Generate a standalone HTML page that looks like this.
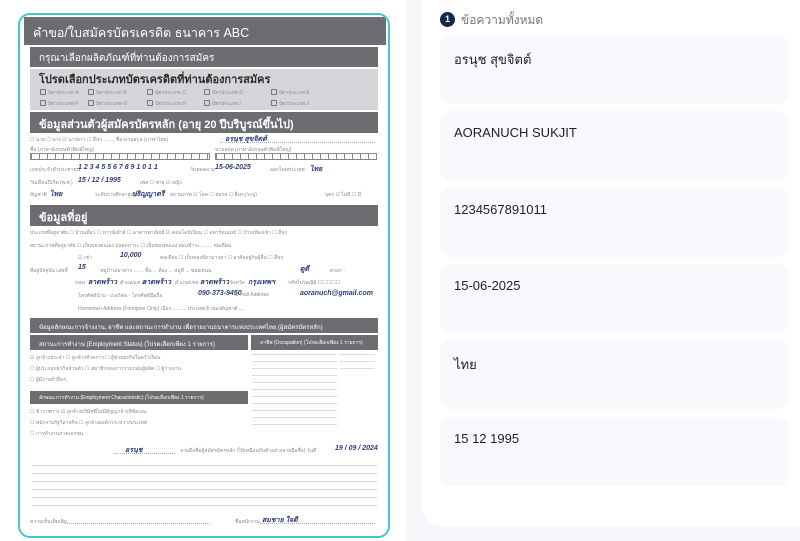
<!DOCTYPE html>
<html><head><meta charset="utf-8"><style>
*{margin:0;padding:0;box-sizing:border-box}
body{width:800px;height:541px;overflow:hidden;background:#fff;font-family:"Liberation Sans","Noto Sans CJK SC",sans-serif;position:relative}
.abs{position:absolute}
.frame{left:18px;top:13px;width:372px;height:525px;border:2px solid #3fcaca;border-radius:12px;background:#fff;overflow:hidden}
.band{position:absolute;background:#6c6d70;color:#fff;font-family:"Liberation Sans","Noto Sans CJK SC",sans-serif;white-space:nowrap}
.t{position:absolute;font-size:5px;color:#8a8a8a;white-space:nowrap;font-family:"Liberation Sans","Noto Sans CJK SC",sans-serif}
.h{position:absolute;font-size:7px;color:#2d3d7a;font-weight:bold;white-space:nowrap;font-style:italic}
.ln{position:absolute;border-bottom:1px dotted #aaa;height:1px}
.cb{position:absolute;width:6px;height:6px;border:1px solid #777;border-radius:1px}
.right{left:406px;top:0;width:394px;height:541px;background:#f5f7fb}
.panel{left:422px;top:-20px;width:400px;height:546px;background:#fff;border-radius:20px}
.card{position:absolute;left:440px;width:348px;height:69px;background:#f7f9fd;border-radius:10px;font-size:13px;color:#222;padding:14px 0 0 14px;font-family:"Liberation Sans","Noto Sans CJK SC",sans-serif}
</style></head><body>
<div class="abs frame">
 <div class="band" style="left:4px;top:2px;width:362px;height:28px;font-size:12.5px;padding:6px 0 0 9px">คำขอ/ใบสมัครบัตรเครดิต ธนาคาร ABC</div>
 <div class="band" style="left:10px;top:32px;width:348px;height:20px;font-size:10px;padding:4px 0 0 9px">กรุณาเลือกผลิตภัณฑ์ที่ท่านต้องการสมัคร</div>
 <div class="abs" style="left:10px;top:54px;width:348px;height:41px;background:#d5d6d9"></div>
 <div class="abs" style="left:19px;top:55px;font-size:11px;color:#2a2a2a;font-weight:bold">โปรดเลือกประเภทบัตรเครดิตที่ท่านต้องการสมัคร</div>
 <div class="cb" style="left:20px;top:74px"></div><div class="t" style="left:28px;top:74px">บัตรประเภท A</div>
 <div class="cb" style="left:68px;top:74px"></div><div class="t" style="left:76px;top:74px">บัตรประเภท B</div>
 <div class="cb" style="left:127px;top:74px"></div><div class="t" style="left:135px;top:74px">บัตรประเภท C</div>
 <div class="cb" style="left:184px;top:74px"></div><div class="t" style="left:192px;top:74px">บัตรประเภท D</div>
 <div class="cb" style="left:251px;top:74px"></div><div class="t" style="left:259px;top:74px">บัตรประเภท E</div>
 <div class="cb" style="left:20px;top:85px"></div><div class="t" style="left:28px;top:85px">บัตรประเภท F</div>
 <div class="cb" style="left:68px;top:85px"></div><div class="t" style="left:76px;top:85px">บัตรประเภท G</div>
 <div class="cb" style="left:127px;top:85px"></div><div class="t" style="left:135px;top:85px">บัตรประเภท H</div>
 <div class="cb" style="left:184px;top:85px"></div><div class="t" style="left:192px;top:85px">บัตรประเภท I</div>
 <div class="cb" style="left:251px;top:85px"></div><div class="t" style="left:259px;top:85px">บัตรประเภท J</div>
 <div class="band" style="left:10px;top:97px;width:348px;height:21px;font-size:11px;padding:3px 0 0 9px;font-weight:bold">ข้อมูลส่วนตัวผู้สมัครบัตรหลัก (อายุ 20 ปีบริบูรณ์ขึ้นไป)</div>
 <div class="t" style="left:10px;top:121px">☐ นาย ☐ นาง ☑ นางสาว ☐ อื่นๆ ........ ชื่อ-นามสกุล (ภาษาไทย)</div><div class="h" style="left:205px;top:119px">อรนุช สุขจิตต์</div><div class="ln" style="left:200px;top:127px;width:155px"></div>
 <div class="t" style="left:10px;top:131px">ชื่อ (ภาษาอังกฤษตัวพิมพ์ใหญ่)</div><div class="t" style="left:195px;top:131px">นามสกุล (ภาษาอังกฤษตัวพิมพ์ใหญ่)</div>
 <div class="abs" style="left:10px;top:138px;width:180px;height:7px;background:repeating-linear-gradient(90deg,#888 0 1px,transparent 1px 8px);border:1px solid #888"></div>
 <div class="abs" style="left:195px;top:138px;width:162px;height:7px;background:repeating-linear-gradient(90deg,#888 0 1px,transparent 1px 8px);border:1px solid #888"></div>
 <div class="t" style="left:10px;top:151px">เลขประจำตัวประชาชน</div><div class="h" style="left:58px;top:149px">1 2 3 4 5 5 6 7 8 9 1 0 1 1</div><div class="t" style="left:170px;top:151px">วันหมดอายุ</div><div class="h" style="left:195px;top:149px">15-06-2025</div><div class="t" style="left:250px;top:151px">ออกโดยประเทศ</div><div class="h" style="left:290px;top:149px">ไทย</div>
 <div class="t" style="left:10px;top:164px">วันเดือนปีเกิด (พ.ศ.)</div><div class="h" style="left:58px;top:162px">15 / 12 / 1995</div><div class="t" style="left:120px;top:164px">เพศ ☐ ชาย ☑ หญิง</div>
 <div class="t" style="left:10px;top:176px">สัญชาติ</div><div class="h" style="left:30px;top:174px">ไทย</div><div class="t" style="left:75px;top:176px">ระดับการศึกษาสูงสุด</div><div class="h" style="left:112px;top:174px">ปริญญาตรี</div><div class="t" style="left:150px;top:176px">สถานภาพ ☑ โสด ☐ สมรส ☐ อื่นๆ (ระบุ)</div><div class="t" style="left:305px;top:176px">บุตร ☑ ไม่มี ☐ มี</div>
 <div class="band" style="left:10px;top:190px;width:348px;height:21px;font-size:11px;padding:3px 0 0 9px;font-weight:bold">ข้อมูลที่อยู่</div>
 <div class="t" style="left:10px;top:214px">ประเภทที่อยู่อาศัย ☐ บ้านเดี่ยว ☐ ทาวน์เฮ้าส์ ☐ อาคารพาณิชย์ ☑ คอนโดมิเนียม ☐ อพาร์ทเมนท์ ☐ บ้าน/ห้องเช่า ☐ อื่นๆ</div>
 <div class="t" style="left:10px;top:227px">สถานะภาพที่อยู่อาศัย ☐ เป็นของตนเอง ปลอดภาระ ☐ เป็นของตนเอง ผ่อนชำระ ........ ต่อเดือน</div>
 <div class="t" style="left:58px;top:239px">☑ เช่า</div><div class="h" style="left:100px;top:237px">10,000</div><div class="t" style="left:140px;top:239px">ต่อเดือน ☐ เป็นของบิดามารดา ☐ อาศัยอยู่กับผู้อื่น ☐ อื่นๆ</div>
 <div class="t" style="left:10px;top:252px">ที่อยู่ปัจจุบัน เลขที่</div><div class="h" style="left:58px;top:249px">15</div><div class="t" style="left:80px;top:252px">หมู่บ้าน/อาคาร ....... ชั้น ... ห้อง ... หมู่ที่ ... ซอย/ถนน</div><div class="h" style="left:280px;top:249px">ดูดี</div><div class="t" style="left:310px;top:252px">ตรอก -</div>
 <div class="t" style="left:55px;top:264px">ถนน</div><div class="h" style="left:68px;top:262px">ลาดพร้าว</div><div class="t" style="left:100px;top:264px">ตำบล/แขวง</div><div class="h" style="left:122px;top:262px">ลาดพร้าว</div><div class="t" style="left:155px;top:264px">อำเภอ/เขต</div><div class="h" style="left:180px;top:262px">ลาดพร้าว</div><div class="t" style="left:210px;top:264px">จังหวัด</div><div class="h" style="left:228px;top:262px">กรุงเทพฯ</div><div class="t" style="left:268px;top:264px">รหัสไปรษณีย์ ☐☐☐☐☐</div>
 <div class="t" style="left:58px;top:277px">โทรศัพท์บ้าน - เบอร์ต่อ - โทรศัพท์มือถือ</div><div class="h" style="left:178px;top:275px">090-373-9450</div><div class="t" style="left:215px;top:277px">E-mail Address</div><div class="h" style="left:280px;top:275px">aoranuch@gmail.com</div>
 <div class="t" style="left:58px;top:290px">Hometown Address (Foreigner Only) เมือง .......... ประเทศเจ้าของสัญชาติ ....</div>
 <div class="band" style="left:10px;top:303px;width:348px;height:15px;font-size:6px;padding:4px 0 0 9px">ข้อมูลลักษณะการจ้างงาน, อาชีพ และสถานะการทำงาน เพื่อรายงานธนาคารแห่งประเทศไทย (ผู้สมัครบัตรหลัก)</div>
 <div class="band" style="left:10px;top:320px;width:218px;height:15px;font-size:6px;padding:4px 0 0 9px">สถานะการทำงาน (Employment Status) (โปรดเลือกเพียง 1 รายการ)</div>
 <div class="band" style="left:231px;top:320px;width:127px;height:15px;font-size:5px;padding:4px 0 0 9px">อาชีพ (Occupation) (โปรดเลือกเพียง 1 รายการ)</div>
 <div class="t" style="left:10px;top:339px">☑ ลูกจ้างประจำ ☐ ลูกจ้างชั่วคราว ☐ ผู้ช่วยธุรกิจในครัวเรือน</div>
 <div class="t" style="left:10px;top:350px">☐ ผู้ประกอบธุรกิจส่วนตัว ☐ สมาชิกของการรวมกลุ่มผู้ผลิต ☐ ผู้ว่างงาน</div>
 <div class="t" style="left:10px;top:361px">☐ ผู้มีงานทำอื่นๆ</div>
 <div class="band" style="left:10px;top:376px;width:218px;height:13px;font-size:5px;padding:3px 0 0 9px">ลักษณะการทำงาน (Employment Characteristic) (โปรดเลือกเพียง 1 รายการ)</div>
 <div class="t" style="left:10px;top:393px">☐ ข้าราชการ ☑ ลูกจ้างบริษัทที่ไม่มีสัญญาจ้างที่ชัดเจน</div>
 <div class="t" style="left:10px;top:404px">☐ พนักงานรัฐวิสาหกิจ ☐ ลูกจ้างองค์กรระหว่างประเทศ</div>
 <div class="t" style="left:10px;top:415px">☐ การทำงานภาคเอกชน</div>
 <div style="position:absolute;left:232px;top:339px;width:85px;height:72px;background:repeating-linear-gradient(180deg,#999 0 1px,#fff 1px 7px);opacity:.35"></div>
 <div style="position:absolute;left:320px;top:339px;width:35px;height:20px;background:repeating-linear-gradient(180deg,#999 0 1px,#fff 1px 7px);opacity:.35"></div>
 <div class="h" style="left:105px;top:430px">อรนุช</div><div class="ln" style="left:95px;top:438px;width:60px"></div><div class="t" style="left:160px;top:432px">ลายมือชื่อผู้สมัครบัตรหลัก (ให้เหมือนกับตัวอย่างลายมือชื่อ) วันที่</div><div class="h" style="left:315px;top:430px">19 / 09 / 2024</div>
 <div style="position:absolute;left:12px;top:450px;width:345px;height:42px;background:repeating-linear-gradient(180deg,#bbb 0 1px,#fff 1px 8px);opacity:.55"></div>
 <div class="t" style="left:10px;top:503px">ความเห็นเพิ่มเติม</div><div class="ln" style="left:45px;top:508px;width:145px"></div><div class="t" style="left:215px;top:503px">ชื่อพนักงาน</div><div class="h" style="left:242px;top:500px">สมชาย ใจดี</div><div class="ln" style="left:240px;top:508px;width:115px"></div>
</div>
<div class="abs right"></div>
<div class="abs panel"></div>
<div class="abs" style="left:440px;top:12px;width:15px;height:15px;border-radius:50%;background:#0f2a48;color:#fff;font-size:9px;font-weight:bold;text-align:center;line-height:15px">1</div>
<div class="abs" style="left:461px;top:11px;font-size:12px;color:#777">ข้อความทั้งหมด</div>
<div class="card" style="top:35px">อรนุช สุขจิตต์</div>
<div class="card" style="top:111px">AORANUCH SUKJIT</div>
<div class="card" style="top:188px">1234567891011</div>
<div class="card" style="top:264px">15-06-2025</div>
<div class="card" style="top:340px">ไทย</div>
<div class="card" style="top:417px">15 12 1995</div>
</body></html>
